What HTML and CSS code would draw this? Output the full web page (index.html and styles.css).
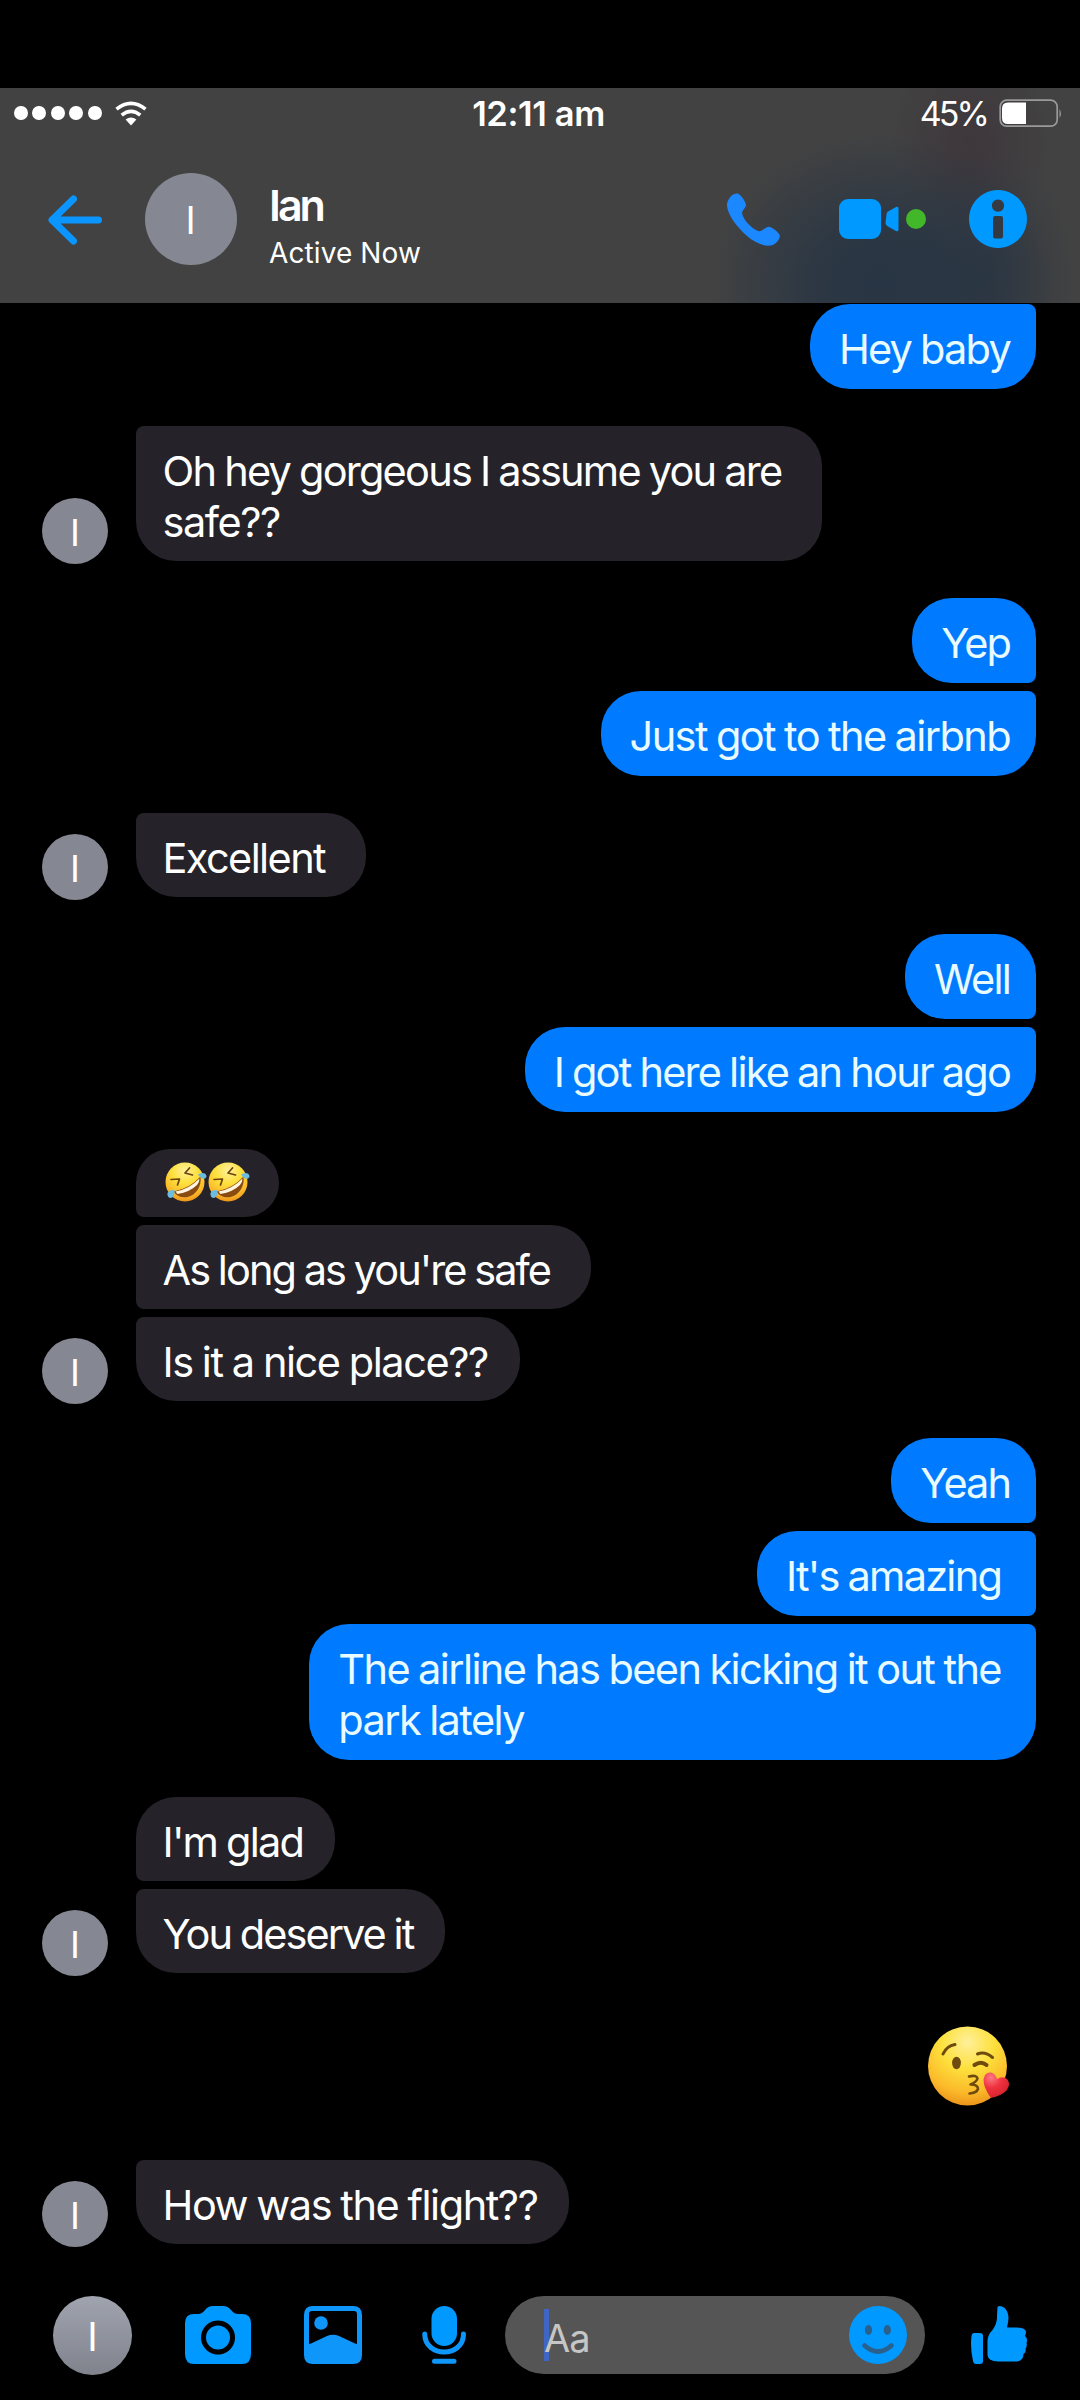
FILE: index.html
```html
<!DOCTYPE html>
<html lang="en">
<head>
<meta charset="utf-8">
<title>Ian</title>
<link rel="stylesheet" href="styles.css">
</head>
<body>
<svg width="0" height="0" class="defs" aria-hidden="true">
  <defs>
    <radialGradient id="face" cx=".5" cy=".2" r=".85">
      <stop offset="0" stop-color="#fff09a"/><stop offset=".4" stop-color="#fde03c"/><stop offset=".75" stop-color="#fbb92a"/><stop offset="1" stop-color="#e98a17"/>
    </radialGradient>
    <radialGradient id="heart" cx=".3" cy=".2" r=".9">
      <stop offset="0" stop-color="#fb7a83"/><stop offset=".45" stop-color="#f0323f"/><stop offset="1" stop-color="#cf2028"/>
    </radialGradient>
    <symbol id="rofl" viewBox="0 0 42 42">
      <circle cx="20" cy="21" r="19.5" fill="url(#face)"/>
      <g fill="none" stroke="#6b4310" stroke-width="1.7" stroke-linecap="round" stroke-linejoin="round">
        <path d="M6 18.5L14.5 18L12.5 24"/><path d="M24.5 7L20 12L27.500 14"/>
      </g>
      <path d="M8.500 30.500Q25 27.500 35.500 15.500C37 25 31 34.500 22.500 36Q13 37.500 8.500 30.500z" fill="#8a4b10"/>
      <path d="M10.500 30.500Q24.500 28 34.500 17.500Q34.500 21 32 24Q25 31 12.500 33z" fill="#fff4df"/>
      <path d="M33 13.500Q36 11 40 12.500Q43 15.500 40 17.500Q36 18.500 33 13.500zM9.500 29Q4 28.500 2.500 32Q2 37 6 37Q10 35.500 9.500 29z" fill="#6cbbe0"/>
    </symbol>
  </defs>
</svg>
<div class="screen">
  <header class="header">
    <div class="status">
      <div class="signal">
        <i></i><i></i><i></i><i></i><i></i>
        <svg class="wifi" viewBox="0 0 32 25" width="32" height="25">
          <g fill="none" stroke="#fff" stroke-width="3.6"><path d="M1.500 8.200Q16 -3.400 30.500 8.200"/><path d="M6.700 14.200Q16 6.600 25.300 14.200"/></g>
          <path d="M10.600 18.500Q16 14.700 21.400 18.500L16 24.600z" fill="#fff"/>
        </svg>
      </div>
      <div class="clock">12:11 am</div>
      <div class="power">
        <span class="percent">45%</span>
        <svg viewBox="0 0 64 29" width="64" height="29">
          <rect x="1.200" y="1.200" width="57" height="26" rx="6.500" fill="none" stroke="#9a9a9a" stroke-width="1.700"/>
          <path d="M9 3.500H27V25H9Q3 25 3 19V9.500Q3 3.500 9 3.500z" fill="#fff"/>
          <path d="M60.500 10Q63.500 14.500 60.500 19z" fill="#9a9a9a"/>
        </svg>
      </div>
    </div>
    <div class="nav">
      <svg class="back" viewBox="0 0 54 50" width="54" height="50"><path d="M25.500 4L4 25L25.500 46M5 25H50.500" fill="none" stroke="#0a95ff" stroke-width="7" stroke-linecap="round" stroke-linejoin="round"/></svg>
      <div class="avatar avatar-lg">I</div>
      <div class="who">
        <div class="name">Ian</div>
        <div class="presence">Active Now</div>
      </div>
      <div class="actions">
        <svg viewBox="0 0 53 53" width="53" height="53"><path d="M2 6C4 2 8 -.5 11.500 .8C15 3.500 18 8 19 11.500C19 15 15 17 15 20C16 27 25.500 36.500 32 38.300C36 38.500 38 33.500 42 33.700C46 35 51 38.500 52.700 42C53.500 46 48.500 51 45 52.300C38 54 28 50 20 43C9 33 1 22 0 13Q-.2 9 2 6z" fill="#1b88ff"/></svg>
        <div class="video">
          <svg viewBox="0 0 60 40" width="60" height="40"><rect width="42" height="40" rx="9" fill="#0099ff"/><path d="M47.500 15.500Q47.500 13.500 49 12.500L57 8Q59.500 7 59.500 9.500V30.500Q59.500 33 57 32L49 27.500Q46.500 26 46.500 24z" fill="#0099ff"/></svg>
          <span class="online"></span>
        </div>
        <svg viewBox="0 0 58 58" width="58" height="58"><path fill="#0099ff" fill-rule="evenodd" d="M29 0A29 29 0 1 1 28.990 0zM29 9.500A6.100 6.100 0 1 0 29.010 9.500zM26 26H32Q34 26 34 28V46.500Q34 48.500 32 48.500H26Q24 48.500 24 46.500V28Q24 26 26 26z"/></svg>
      </div>
    </div>
  </header>

  <main class="thread">
    <section class="group out">
      <p class="bubble tail-top">Hey baby</p>
    </section>
    <section class="group in">
      <div class="avatar">I</div>
      <div class="stack"><p class="bubble">Oh hey gorgeous I assume you are <br><span class="loose">safe??</span></p></div>
    </section>
    <section class="group out">
      <p class="bubble tight">Yep</p>
      <p class="bubble snug">Just got to the airbnb</p>
    </section>
    <section class="group in">
      <div class="avatar">I</div>
      <div class="stack"><p class="bubble snug">Excellent </p></div>
    </section>
    <section class="group out">
      <p class="bubble">Well</p>
      <p class="bubble">I got here like an hour ago</p>
    </section>
    <section class="group in">
      <div class="avatar">I</div>
      <div class="stack">
        <p class="bubble emoji"><svg width="42" height="42" role="img"><use href="#rofl"/></svg><svg width="42" height="42" role="img"><use href="#rofl"/></svg></p>
        <p class="bubble tight">As long as you're safe </p>
        <p class="bubble loose">Is it a nice place??</p>
      </div>
    </section>
    <section class="group out">
      <p class="bubble tight">Yeah</p>
      <p class="bubble">It's amazing </p>
      <p class="bubble snug">The airline has been kicking it out the <br>park lately</p>
    </section>
    <section class="group in round-top">
      <div class="avatar">I</div>
      <div class="stack">
        <p class="bubble">I'm glad</p>
        <p class="bubble tight">You deserve it</p>
      </div>
    </section>
    <section class="sticker">
      <svg viewBox="0 0 82 80" width="82" height="80">
        <circle cx="39.500" cy="40" r="39.500" fill="url(#face)"/>
        <g fill="none" stroke="#6f4a0e" stroke-linecap="round">
          <path d="M15 28Q18.500 20 27 18.500" stroke-width="3"/>
          <path d="M49.500 28Q57 25 64.500 31.500" stroke-width="3"/>
          <path d="M46.500 39Q53 34.500 58.500 39" stroke-width="4"/>
          <path d="M41 50.500Q48.500 48.500 49.500 52.500Q48.500 56 42.500 58.500Q50 58.500 50 63Q48.500 67 41.500 67.500" stroke-width="2.600" stroke-linejoin="round"/>
        </g>
        <ellipse cx="28.500" cy="37" rx="4.400" ry="6.200" fill="#6f4a0e"/>
        <path d="M63 72Q55.500 62 55.500 53.500Q56.500 46 63 46.500Q67.500 47.500 69 53Q75 49.500 79.500 53.500Q83 59 78.500 64.500Q73 70 63 72z" fill="url(#heart)"/>
      </svg>
    </section>
    <section class="group in">
      <div class="avatar">I</div>
      <div class="stack"><p class="bubble loose">How was the flight??</p></div>
    </section>
  </main>

  <footer class="composer">
    <div class="avatar avatar-me">I</div>
    <svg class="camera" viewBox="0 0 66 58" width="66" height="58"><path fill="#0099ff" fill-rule="evenodd" d="M9 8H13Q17 8 20 4Q23 0 28 0H38Q43 0 46 4Q49 8 53 8H57Q66 8 66 17V48Q66 58 57 58H9Q0 58 0 48V17Q0 8 9 8zM33 14.500A17 17 0 1 0 33.010 14.500z"/><circle cx="33" cy="31.500" r="12" fill="#0099ff"/></svg>
    <svg class="photo" viewBox="0 0 58 58" width="58" height="58"><path fill="#0f96fb" fill-rule="evenodd" d="M9 0H49Q58 0 58 9V49Q58 58 49 58H9Q0 58 0 49V9Q0 0 9 0zM8 5Q5 5 5 8V38L7 37.500L23 30Q29 27.500 35 30L51 37.500L53 38V8Q53 5 50 5z"/><circle cx="17" cy="17" r="6.800" fill="#0f96fb"/></svg>
    <svg class="mic" viewBox="0 0 44 58" width="44" height="58"><rect x="9.500" width="25.500" height="40" rx="12.700" fill="#0099ff"/><path d="M2.700 28C3 52 41.500 52 41.500 28M12.500 55.300H32" fill="none" stroke="#0f96fb" stroke-width="5" stroke-linecap="round"/></svg>
    <div class="field">
      <span class="caret"></span><span class="hint">Aa</span>
      <svg class="smile" viewBox="0 0 58 58" width="58" height="58"><circle cx="29" cy="29" r="29" fill="#0099ff"/><ellipse cx="19.500" cy="24" rx="3.600" ry="5" fill="#2b5f8c"/><ellipse cx="38.300" cy="24" rx="3.600" ry="5" fill="#2b5f8c"/><path d="M15.500 39.500Q29 51.500 42.500 39.500" fill="none" stroke="#2b5f8c" stroke-width="4.600" stroke-linecap="round"/></svg>
    </div>
    <svg class="like" viewBox="0 0 56 58" width="56" height="58"><path fill="#0099ff" d="M3 27H9Q12 27 12 30V55Q12 58 9 58H5Q2.500 58 2 55Q-1 42 .5 30Q1 27 3 27zM26.500 1Q28 -.5 31 .5Q37 3 37.500 11Q37.500 16 36 21.500H45Q54 21.500 55 25.500Q55 28 54 30Q57 32 55.500 37Q56.500 39 54.500 43Q55.500 46 52.500 48Q52.500 54.500 46 55.500H27Q17 55 16.500 49V35Q16.500 29 21.500 24Q26.500 17 26 10z"/></svg>
  </footer>
</div>
</body>
</html>
```
FILE: styles.css
```css
* { box-sizing: border-box; }
body { margin: 0; background: #000; color: #fff; font-family: Inter, "Liberation Sans", sans-serif; }
svg { display: block; flex: none; }
.defs { position: absolute; }
.screen { width: 1080px; height: 2400px; padding-top: 88px; display: flex; flex-direction: column; overflow: hidden; background: #000; }

/* header */
.header {
  height: 215px; flex: none;
  background:
    radial-gradient(ellipse 170px 150px at 880px 195px, rgba(38,52,68,.95) 0, rgba(38,52,68,.75) 40%, rgba(38,52,68,0) 100%),
    radial-gradient(ellipse 90px 130px at 985px 190px, rgba(38,50,64,.7) 0, rgba(38,50,64,0) 100%),
    radial-gradient(ellipse 80px 100px at 970px 55px, rgba(60,48,56,.65) 0, rgba(60,48,56,0) 100%),
    #424242;
}
.status { display: grid; grid-template-columns: 1fr auto 1fr; align-items: center; height: 50px; padding: 0 17px 0 14px; }
.signal { display: flex; align-items: center; gap: 4.400px; }
.signal i { width: 14px; height: 14.500px; border-radius: 50%; background: #fff; }
.wifi { margin-left: 9px; }
.clock { font-size: 34.500px; font-weight: 600; letter-spacing: -.4px; white-space: nowrap; }
.power { display: flex; justify-content: flex-end; align-items: center; gap: 12px; }
.percent { font-size: 34px; letter-spacing: -2.900px; }
.nav { display: flex; align-items: center; height: 162px; padding: 0 53px 0 48px; }
.back { margin-top: 2px; }
.avatar { flex: none; display: flex; align-items: center; justify-content: center; width: 66px; height: 66px; border-radius: 50%; background: #858892; font-size: 37px; line-height: 1; padding-top: 2px; }
.avatar-lg { width: 92px; height: 92px; margin-left: 43px; padding-right: 1px; font-size: 38px; }
.who { margin-left: 32px; padding-top: 11px; }
.name { font-size: 43px; font-weight: 600; letter-spacing: -3px; line-height: 50px; }
.presence { font-size: 28px; line-height: 34px; margin-top: 6px; letter-spacing: .1px; }
.actions { margin-left: auto; display: flex; align-items: center; }
.video { display: flex; align-items: center; margin: 0 43px 0 59px; gap: 7px; }
.online { width: 20px; height: 20px; border-radius: 50%; background: #42b72a; }

/* conversation */
.thread { flex: none; height: 1967px; padding: 1px 44px 0 42px; display: flex; flex-direction: column; gap: 37px; }
.group { display: flex; }
.out { flex-direction: column; align-items: flex-end; gap: 8px; }
.in { align-items: flex-end; gap: 28px; }
.in > .avatar { margin-bottom: -3px; }
.stack { display: flex; flex-direction: column; align-items: flex-start; gap: 8px; }
.bubble { margin: 0; padding: 20px 32px 13px 26.500px; border-radius: 40px; font-size: 41.500px; line-height: 51px; letter-spacing: -1.770px; word-spacing: -1px; white-space: pre; }
.tight { letter-spacing: -1.950px; }
.snug { letter-spacing: -1.600px; }
.loose { letter-spacing: -1.450px; }
.in .bubble { background: #252329; border-top-left-radius: 8px; border-bottom-left-radius: 8px; }
.in .bubble:last-child { border-bottom-left-radius: 40px; }
.out .bubble { background: #007aff; color: #e8fbff; padding: 20px 26px 14px 29px; border-top-right-radius: 8px; border-bottom-right-radius: 8px; }
.out .bubble:first-child:not(.tail-top) { border-top-right-radius: 40px; }
.out .bubble:last-child { border-bottom-right-radius: 40px; }
.in.round-top .bubble:first-child { border-top-left-radius: 40px; }
.in .bubble.emoji { display: flex; gap: 1px; height: 68px; padding: 12px 29px; border-radius: 34px 34px 34px 8px; }
.sticker { display: flex; justify-content: flex-end; height: 113px; padding: 16px 26px 0 0; }

/* composer */
.composer { flex: 1; display: flex; align-items: center; padding: 0 53px 0 53px; }
.avatar-me { width: 79px; height: 79px; font-size: 39px; background: linear-gradient(#a0a4af, #80838c); }
.camera { margin-left: 53px; }
.photo { margin-left: 53px; }
.mic { margin-left: 60px; }
.field { display: flex; align-items: center; width: 420px; height: 78px; margin-left: 39px; padding: 0 18px 0 39px; border-radius: 39px; background: #555556; }
.caret { width: 5px; height: 52px; background: #3f66c4; }
.hint { margin-left: -5px; padding-top: 5px; font-size: 38px; line-height: 1; letter-spacing: -1px; color: #c6c6c6; }
.smile { margin-left: auto; }
.like { margin-left: auto; }
```
